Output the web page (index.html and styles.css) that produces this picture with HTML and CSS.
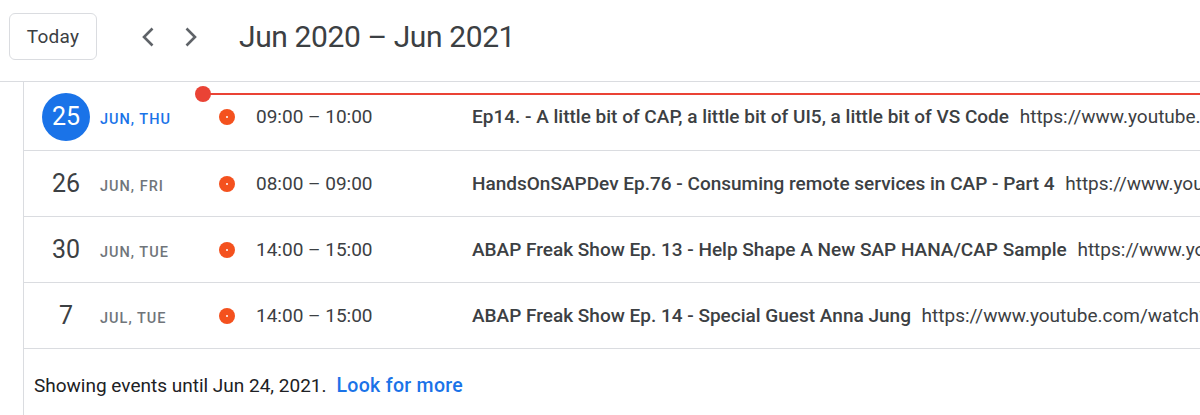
FILE: index.html
```html
<!DOCTYPE html>
<html>
<head>
<meta charset="utf-8">
<link rel="stylesheet" href="styles.css">
</head>
<body>
<header class="toolbar">
  <button class="today-btn">Today</button>
  <div class="nav">
    <span class="nav-btn"><svg width="24" height="24" viewBox="0 0 24 24"><path d="M16.5 3.5L8 12l8.5 8.5" fill="none" stroke="#5f6368" stroke-width="2.6"/></svg></span>
    <span class="nav-btn"><svg width="24" height="24" viewBox="0 0 24 24"><path d="M7.5 3.5L16 12l-8.5 8.5" fill="none" stroke="#5f6368" stroke-width="2.6"/></svg></span>
  </div>
  <h1 class="title">Jun 2020 – Jun 2021</h1>
</header>
<main class="schedule">
  <div class="row row-first">
    <div class="now-line"><span class="now-dot"></span></div>
    <div class="date">
      <span class="day-num today">25</span>
      <span class="day-label today-label">JUN, THU</span>
    </div>
    <span class="ev-dot"></span>
    <span class="time">09:00 – 10:00</span>
    <span class="event"><b>Ep14. - A little bit of CAP, a little bit of UI5, a little bit of VS Code</b> https://www.youtube.com/watch?v=4X9zL7Q3rTc</span>
  </div>
  <div class="row">
    <div class="date">
      <span class="day-num">26</span>
      <span class="day-label">JUN, FRI</span>
    </div>
    <span class="ev-dot"></span>
    <span class="time">08:00 – 09:00</span>
    <span class="event"><b>HandsOnSAPDev Ep.76 - Consuming remote services in CAP - Part 4</b> https://www.youtube.com/watch?v=Tm8QH7i8wXk</span>
  </div>
  <div class="row">
    <div class="date">
      <span class="day-num">30</span>
      <span class="day-label">JUN, TUE</span>
    </div>
    <span class="ev-dot"></span>
    <span class="time">14:00 – 15:00</span>
    <span class="event"><b>ABAP Freak Show Ep. 13 - Help Shape A New SAP HANA/CAP Sample</b> https://www.youtube.com/watch?v=8fXn0hD4jkA</span>
  </div>
  <div class="row">
    <div class="date">
      <span class="day-num">7</span>
      <span class="day-label">JUL, TUE</span>
    </div>
    <span class="ev-dot"></span>
    <span class="time">14:00 – 15:00</span>
    <span class="event"><b>ABAP Freak Show Ep. 14 - Special Guest Anna Jung</b> https://www.youtube.com/watch?v=Yl2gJ0nGc5E</span>
  </div>
  <div class="footer">
    <span>Showing events until Jun 24, 2021.</span>
    <a class="more">Look for more</a>
  </div>
</main>
</body>
</html>
```

FILE: styles.css
```css
* { box-sizing: border-box; }
html, body {
  margin: 0;
  padding: 0;
  background: #fff;
  font-family: Roboto, "Liberation Sans", sans-serif;
  color: #3c4043;
  overflow: hidden;
}
.toolbar {
  height: 82px;
  display: flex;
  align-items: center;
  padding: 0 0 8px 9px;
  border-bottom: 1px solid #dadce0;
}
.today-btn {
  width: 88px;
  height: 47px;
  border: 1px solid #dadce0;
  border-radius: 6px;
  background: #fff;
  font-family: Roboto, sans-serif;
  font-size: 19px;
  font-weight: 400;
  letter-spacing: 0.3px;
  color: #3c4043;
  padding: 0;
}
.nav {
  display: flex;
  gap: 19px;
  margin-left: 39px;
}
.nav-btn {
  width: 24px;
  height: 24px;
  display: flex;
}
.nav-btn svg { width: 24px; height: 24px; }
.title {
  margin: 0 0 0 36px;
  font-size: 30px;
  font-weight: 400;
  color: #3c4043;
  letter-spacing: -0.4px;
}
.schedule {
  margin-left: 23px;
  border-left: 1px solid #dadce0;
  height: 333px;
}
.row {
  position: relative;
  display: flex;
  align-items: center;
  height: 66px;
  border-bottom: 1px solid #dadce0;
  white-space: nowrap;
  overflow: hidden;
}
.row-first {
  height: 69px;
  padding-top: 1px;
}
.now-line {
  position: absolute;
  left: 179px;
  right: 0;
  top: 11px;
  height: 2px;
  background: #ea4335;
}
.now-dot {
  position: absolute;
  left: -8px;
  top: -7px;
  width: 16px;
  height: 16px;
  border-radius: 50%;
  background: #ea4335;
}
.date {
  width: 194px;
  flex: none;
  display: flex;
  align-items: center;
  padding-left: 18px;
}
.day-num {
  width: 48px;
  height: 48px;
  border-radius: 50%;
  display: flex;
  align-items: center;
  justify-content: center;
  font-size: 25px;
  color: #3c4043;
}
.day-num.today {
  background: #1a73e8;
  color: #fff;
}
.day-label {
  margin-left: 10px;
  margin-top: 6px;
  font-size: 14.5px;
  font-weight: 500;
  letter-spacing: 1px;
  color: #70757a;
}
.day-label.today-label { color: #1a73e8; }
.ev-dot {
  flex: none;
  width: 16px;
  height: 16px;
  border-radius: 50%;
  background: #f4511e;
  position: relative;
  margin-left: 1px;
}
.ev-dot::after {
  content: "";
  position: absolute;
  left: 7px;
  top: 7px;
  width: 2px;
  height: 2px;
  border-radius: 50%;
  background: #fff;
}
.time {
  flex: none;
  width: 216px;
  margin-left: 21px;
  font-size: 19px;
  color: #3c4043;
}
.event {
  font-size: 19px;
  color: #3c4043;
}
.event b {
  font-weight: 500;
  margin-right: 6px;
}
.footer {
  display: flex;
  align-items: center;
  height: 66px;
  padding: 6px 0 0 10px;
  font-size: 19px;
  color: #202124;
}
.more {
  margin-left: 10px;
  color: #1a73e8;
  font-weight: 500;
  font-size: 19.5px;
  letter-spacing: 0.3px;
}
```
